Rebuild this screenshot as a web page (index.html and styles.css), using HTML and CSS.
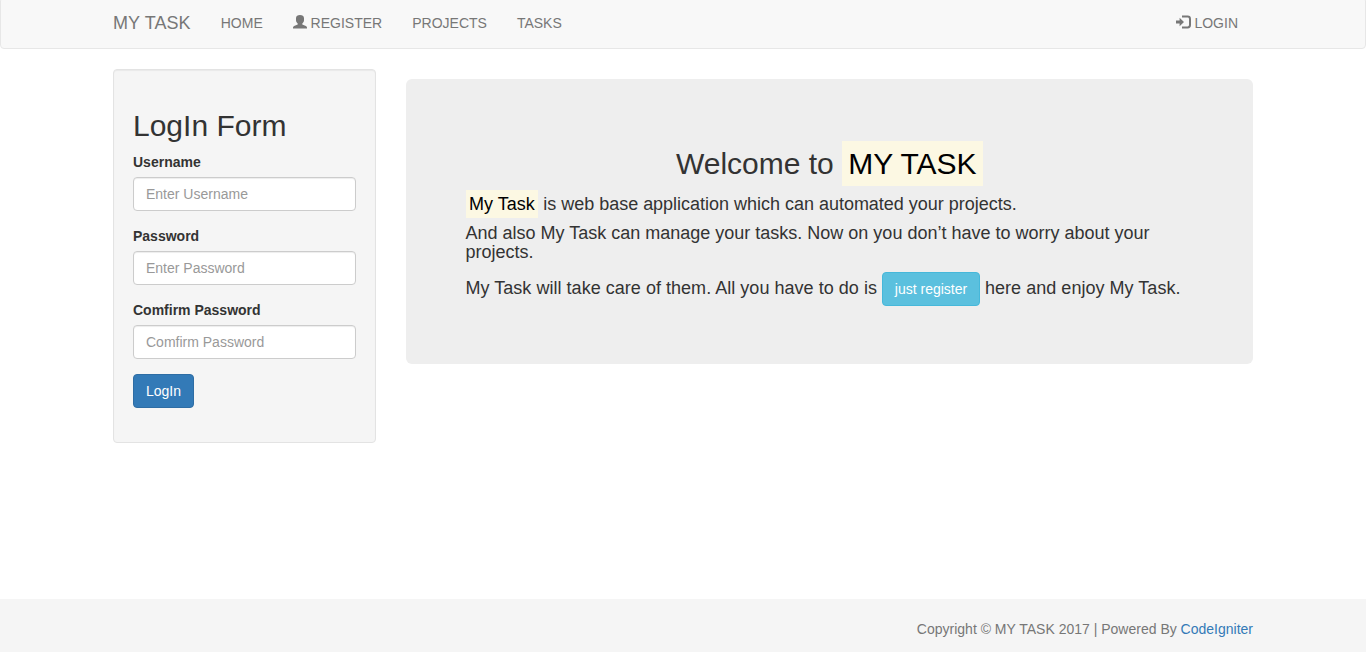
FILE: index.html
```html
<!DOCTYPE html>
<html lang="en">
<head>
<meta charset="utf-8">
<title>MY TASK</title>
<link rel="stylesheet" href="styles.css">
</head>
<body>
<nav class="navbar">
  <div class="container navbar-inner">
    <a class="brand" href="#">MY TASK</a>
    <ul class="nav">
      <li><a href="#">HOME</a></li>
      <li><a href="#"><svg class="icon" viewBox="0 0 14 14"><path d="M7 0C9.3 0 11 1.2 11 3.2V5.2C11 6.7 10.3 7.6 9.3 8.5V9.4L12.9 11Q14 11.5 14 12.5V13.6H0V12.5Q0 11.5 1.1 11L4.7 9.4V8.5C3.7 7.6 3 6.7 3 5.2V3.2C3 1.2 4.7 0 7 0Z" fill="currentColor"/></svg> REGISTER</a></li>
      <li><a href="#">PROJECTS</a></li>
      <li><a href="#">TASKS</a></li>
    </ul>
    <ul class="nav nav-right">
      <li><a href="#"><svg class="icon icon-login" viewBox="0 0 15 14"><path d="M0 5.5h3.6V2.8L8 7 3.6 11.2V8.5H0z" fill="currentColor"/><path d="M6 1.6h5.6q2.4 0 2.4 2.4v6q0 2.4-2.4 2.4H6" fill="none" stroke="currentColor" stroke-width="2"/></svg> LOGIN</a></li>
    </ul>
  </div>
</nav>
<main class="container content">
  <aside class="sidebar">
    <form class="well">
      <h2>LogIn Form</h2>
      <div class="form-group">
        <label for="username">Username</label>
        <input id="username" class="form-control" type="text" placeholder="Enter Username">
      </div>
      <div class="form-group">
        <label for="password">Password</label>
        <input id="password" class="form-control" type="password" placeholder="Enter Password">
      </div>
      <div class="form-group">
        <label for="confirm">Comfirm Password</label>
        <input id="confirm" class="form-control" type="password" placeholder="Comfirm Password">
      </div>
      <div class="form-group">
        <button class="btn btn-primary" type="button">LogIn</button>
      </div>
    </form>
  </aside>
  <section class="jumbotron">
    <h2 class="text-center">Welcome to <mark>MY TASK</mark></h2>
    <h4 class="lead"><mark>My Task</mark> is web base application which can automated your projects.</h4>
    <h4>And also My Task can manage your tasks. Now on you don’t have to worry about your projects.</h4>
    <h4 class="invite">My Task will take care of them. All you have to do is <a class="btn btn-info" href="#">just register</a> here and enjoy My Task.</h4>
  </section>
</main>
<footer class="footer">
  <div class="container">
    <p>Copyright © MY TASK 2017 | Powered By <a href="#">CodeIgniter</a></p>
  </div>
</footer>
</body>
</html>
```
FILE: styles.css
```css
* { box-sizing: border-box; }

body {
  display: flex;
  flex-direction: column;
  height: 652px;
  margin: 0;
  overflow: hidden;
  background: #fff;
  color: #333;
  font: 14px/20px "Liberation Sans", Arial, sans-serif;
}

a { color: #337ab7; text-decoration: none; }

.container {
  width: 1170px;
  margin: 0 auto;
  padding: 0 15px;
}

.navbar {
  flex: none;
  height: 52px;
  margin: -3px 0 20px;
  border: 1px solid #e7e7e7;
  border-radius: 4px;
  background: #f8f8f8;
}

.navbar-inner { display: flex; }
.navbar a { display: block; padding: 15px; color: #777; }
.navbar .brand { padding-left: 0; font-size: 18px; letter-spacing: .1px; }
.nav { display: flex; margin: 0; padding: 0; list-style: none; }
.nav-right { margin-left: auto; }

.icon {
  width: 14px;
  height: 14px;
  vertical-align: -1px;
}
.icon-login { width: 15px; margin-left: -1px; }

.content {
  display: grid;
  grid-template-columns: 262.5px 847.5px;
  gap: 30px;
  align-items: start;
}

.well {
  padding: 19px;
  border: 1px solid #e3e3e3;
  border-radius: 4px;
  background: #f5f5f5;
  box-shadow: inset 0 1px 1px rgba(0, 0, 0, .05);
}

h2, h4 { font-weight: 500; }
h2 { margin: 20px 0 10px; font-size: 30px; line-height: 33px; }
h4 { margin: 10px 0; font-size: 18px; line-height: 19px; }

.form-group { margin-bottom: 15px; }
label { display: block; margin-bottom: 5px; font-weight: 700; }

.form-control {
  display: block;
  width: 100%;
  height: 34px;
  padding: 6px 12px;
  border: 1px solid #ccc;
  border-radius: 4px;
  background: #fff;
  box-shadow: inset 0 1px 1px rgba(0, 0, 0, .075);
  color: #555;
  font: inherit;
}
.form-control::placeholder { color: #999; opacity: 1; }

.btn {
  display: inline-block;
  padding: 6px 12px;
  border: 1px solid;
  border-radius: 4px;
  color: #fff;
  font: 14px/20px "Liberation Sans", Arial, sans-serif;
  letter-spacing: 0;
  vertical-align: middle;
}
.btn-primary { display: block; border-color: #2e6da4; background: #337ab7; }
.btn-info { width: 98px; padding: 6px 0; border-color: #46b8da; background: #5bc0de; text-align: center; }

.jumbotron {
  margin-top: 10px;
  padding: 48px 60px;
  border-radius: 6px;
  background: #eee;
}
.jumbotron h2 { margin-bottom: 15px; }
.text-center { text-align: center; }
.lead { letter-spacing: -.015px; }
.invite { letter-spacing: .03px; }
mark { padding: .2em; background: #fcf8e3; color: #000; }

.footer {
  flex: none;
  height: 53px;
  margin-top: auto;
  background: #f5f5f5;
  color: #777;
  text-align: right;
}
.footer p { margin: 20px 0 0; }
```
